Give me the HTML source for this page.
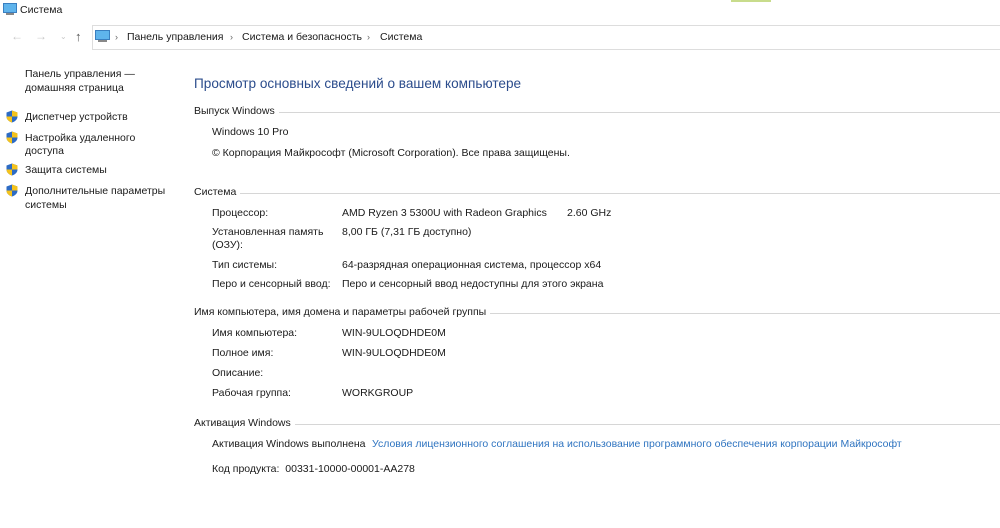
<!DOCTYPE html>
<html><head><meta charset="utf-8"><style>
body{margin:0;width:1000px;height:528px;background:#fff;font-family:"Liberation Sans","DejaVu Sans",sans-serif;font-size:10.5px;color:#1a1a1a;position:relative;overflow:hidden}
.t{position:absolute;white-space:nowrap;line-height:13px}
.sec{position:absolute;left:194px;right:0;display:flex;align-items:center;white-space:nowrap;line-height:13px}
.sec:after{content:"";flex:1;height:1px;background:#d6d6d6;margin-left:4px;margin-top:1px}
.sh{position:absolute;width:12px;height:13px}
</style></head><body>
<div style="position:absolute;left:731px;top:0;width:40px;height:2px;background:#c8dc8c"></div>
<svg style="position:absolute;left:3px;top:3px" width="14" height="12"><rect x="0.5" y="0.5" width="13" height="9" fill="#5fb4ec" stroke="#3a7fc0"/><rect x="3" y="10" width="8" height="2" fill="#888"/></svg>
<div class="t" style="left:20px;top:4px">Система</div>
<div class="t" style="left:11px;top:30px;color:#c8c8c8;font-size:12px">←</div>
<div class="t" style="left:35px;top:30px;color:#c8c8c8;font-size:12px">→</div>
<div class="t" style="left:60px;top:30px;color:#c8c8c8;font-size:8px">⌄</div>
<div class="t" style="left:75px;top:30px;color:#555;font-size:13px">↑</div>
<div style="position:absolute;left:92px;top:25px;width:920px;height:23px;border-top:1px solid #ddd;border-bottom:1px solid #ddd;border-left:1px solid #ddd"></div>
<svg style="position:absolute;left:95px;top:30px" width="15" height="13"><rect x="0.5" y="0.5" width="14" height="9" fill="#5fb4ec" stroke="#3a7fc0"/><rect x="3" y="10" width="9" height="2" fill="#888"/></svg>
<div class="t" style="left:115px;top:31px;color:#666;font-size:9px">›</div>
<div class="t" style="left:127px;top:31px">Панель управления</div>
<div class="t" style="left:230px;top:31px;color:#666;font-size:9px">›</div>
<div class="t" style="left:242px;top:31px">Система и безопасность</div>
<div class="t" style="left:367px;top:31px;color:#666;font-size:9px">›</div>
<div class="t" style="left:380px;top:31px">Система</div>

<div class="t" style="left:25px;top:68px">Панель управления —</div>
<div class="t" style="left:25px;top:82px">домашняя страница</div>
<svg class="sh" style="left:6px;top:110px" viewBox="0 0 12 13"><path d="M6 0.5L11.5 2.5V6.5C11.5 9.5 9 11.5 6 12.5C3 11.5 0.5 9.5 0.5 6.5V2.5Z" fill="#2d6bc4"/><path d="M6 0.5V6.5H11.5V2.5Z M6 6.5V12.5C3 11.5 0.5 9.5 0.5 6.5Z" fill="#f5c31c"/></svg>
<div class="t" style="left:25px;top:111px">Диспетчер устройств</div>
<svg class="sh" style="left:6px;top:131px" viewBox="0 0 12 13"><path d="M6 0.5L11.5 2.5V6.5C11.5 9.5 9 11.5 6 12.5C3 11.5 0.5 9.5 0.5 6.5V2.5Z" fill="#2d6bc4"/><path d="M6 0.5V6.5H11.5V2.5Z M6 6.5V12.5C3 11.5 0.5 9.5 0.5 6.5Z" fill="#f5c31c"/></svg>
<div class="t" style="left:25px;top:132px">Настройка удаленного</div>
<div class="t" style="left:25px;top:145px">доступа</div>
<svg class="sh" style="left:6px;top:163px" viewBox="0 0 12 13"><path d="M6 0.5L11.5 2.5V6.5C11.5 9.5 9 11.5 6 12.5C3 11.5 0.5 9.5 0.5 6.5V2.5Z" fill="#2d6bc4"/><path d="M6 0.5V6.5H11.5V2.5Z M6 6.5V12.5C3 11.5 0.5 9.5 0.5 6.5Z" fill="#f5c31c"/></svg>
<div class="t" style="left:25px;top:164px">Защита системы</div>
<svg class="sh" style="left:6px;top:184px" viewBox="0 0 12 13"><path d="M6 0.5L11.5 2.5V6.5C11.5 9.5 9 11.5 6 12.5C3 11.5 0.5 9.5 0.5 6.5V2.5Z" fill="#2d6bc4"/><path d="M6 0.5V6.5H11.5V2.5Z M6 6.5V12.5C3 11.5 0.5 9.5 0.5 6.5Z" fill="#f5c31c"/></svg>
<div class="t" style="left:25px;top:185px">Дополнительные параметры</div>
<div class="t" style="left:25px;top:199px">системы</div>

<div class="t" style="left:194px;top:76px;font-size:13.6px;line-height:16px;color:#2b4c8c">Просмотр основных сведений о вашем компьютере</div>

<div class="sec" style="top:105px">Выпуск Windows</div>
<div class="t" style="left:212px;top:126px">Windows 10 Pro</div>
<div class="t" style="left:212px;top:147px">© Корпорация Майкрософт (Microsoft Corporation). Все права защищены.</div>

<div class="sec" style="top:186px">Система</div>
<div class="t" style="left:212px;top:207px">Процессор:</div><div class="t" style="left:342px;top:207px">AMD Ryzen 3 5300U with Radeon Graphics</div><div class="t" style="left:567px;top:207px">2.60 GHz</div>
<div class="t" style="left:212px;top:226px">Установленная память</div><div class="t" style="left:212px;top:239px">(ОЗУ):</div><div class="t" style="left:342px;top:226px">8,00 ГБ (7,31 ГБ доступно)</div>
<div class="t" style="left:212px;top:259px">Тип системы:</div><div class="t" style="left:342px;top:259px">64-разрядная операционная система, процессор x64</div>
<div class="t" style="left:212px;top:278px">Перо и сенсорный ввод:</div><div class="t" style="left:342px;top:278px">Перо и сенсорный ввод недоступны для этого экрана</div>

<div class="sec" style="top:306px">Имя компьютера, имя домена и параметры рабочей группы</div>
<div class="t" style="left:212px;top:327px">Имя компьютера:</div><div class="t" style="left:342px;top:327px">WIN-9ULOQDHDE0M</div>
<div class="t" style="left:212px;top:347px">Полное имя:</div><div class="t" style="left:342px;top:347px">WIN-9ULOQDHDE0M</div>
<div class="t" style="left:212px;top:367px">Описание:</div>
<div class="t" style="left:212px;top:387px">Рабочая группа:</div><div class="t" style="left:342px;top:387px">WORKGROUP</div>

<div class="sec" style="top:417px">Активация Windows</div>
<div class="t" style="left:212px;top:438px">Активация Windows выполнена</div><div class="t" style="left:372px;top:438px;color:#2f74c0">Условия лицензионного соглашения на использование программного обеспечения корпорации Майкрософт</div>
<div class="t" style="left:212px;top:463px">Код продукта:&nbsp; 00331-10000-00001-AA278</div>
</body></html>
